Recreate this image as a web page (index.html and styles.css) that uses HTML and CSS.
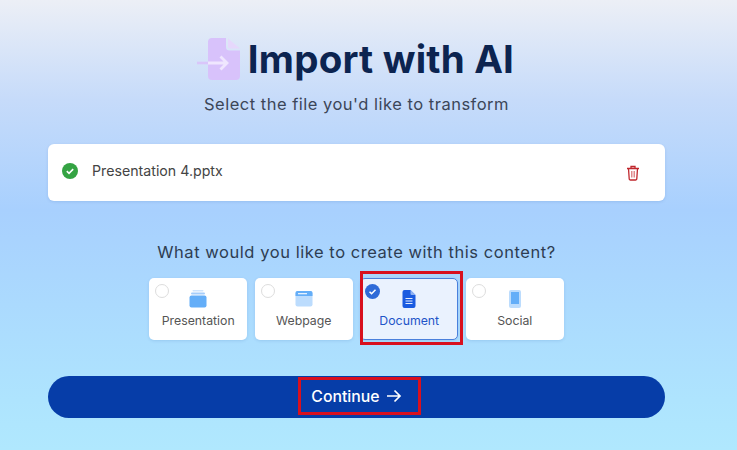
FILE: index.html
```html
<!DOCTYPE html>
<html>

<head>
    <meta charset="UTF-8" />
    <meta name="viewport" content="width=device-width, initial-scale=1.0" />
    <title>Import with AI</title>
    <link rel="stylesheet" href="styles.css">
</head>

<body>
    <div class="container">
        <div class="heading">
            <svg class="heading-icon" width="44" height="42" viewBox="0 0 44 42">
                <path d="M11 4a4 4 0 0 1 4-4h14v9a3.500 3.500 0 0 0 3.500 3.500H43V38a4 4 0 0 1-4 4H15a4 4 0 0 1-4-4z" fill="#d8c2fb" />
                <path d="M31 0.500L43 10.500H33a2 2 0 0 1-2-2z" fill="#e6d8fc" />
                <path d="M0 25h11" stroke="#d9c6fa" stroke-width="2.600" fill="none" />
                <path d="M11 25h19M23.500 18.500l6.500 6.500-6.500 6.500" stroke="#efe6fe" stroke-width="2.800" fill="none" />
            </svg>
            <h1>Import with AI</h1>
        </div>
        <p class="subtitle">Select the file you'd like to transform</p>

        <div class="file-card">
            <svg class="file-check" width="16" height="16" viewBox="0 0 16 16">
                <circle cx="8" cy="8" r="8" fill="#34a343" />
                <path d="M4.800 8.200l2.200 2.100 4.200-4.200" stroke="#fff" stroke-width="1.600" fill="none" />
            </svg>
            <span class="file-name">Presentation 4.pptx</span>
            <svg class="file-delete" width="14" height="16" viewBox="0 0 14 16">
                <path d="M1 3.500h12M5 3.500V1.500h4v2M2.500 3.500l.7 10.300a1.200 1.200 0 0 0 1.200 1.200h5.200a1.200 1.200 0 0 0 1.200-1.200l.7-10.300" stroke="#c0272d" stroke-width="1.300" fill="none" />
                <path d="M5.500 6v6.500M7 6v6.500M8.500 6v6.500" stroke="#e08a8d" stroke-width="1" fill="none" />
            </svg>
        </div>

        <h2>What would you like to create with this content?</h2>

        <div class="options">
            <div class="option">
                <span class="radio"></span>
                <svg class="option-icon" width="18" height="18" viewBox="0 0 18 18">
                    <rect x="3.500" y="0" width="11" height="1.500" rx=".7" fill="#cfe4fd" />
                    <rect x="2" y="2.500" width="14" height="2" rx="1" fill="#a5cdfb" />
                    <rect x="0.500" y="5.500" width="17" height="12" rx="2" fill="#64aef8" />
                </svg>
                <span class="option-label">Presentation</span>
            </div>
            <div class="option">
                <span class="radio"></span>
                <svg class="option-icon" width="18" height="16" viewBox="0 0 18 16">
                    <rect x="0.500" y="0" width="17" height="15.500" rx="2" fill="#bcdcfd" />
                    <path d="M0.500 2a2 2 0 0 1 2-2h13a2 2 0 0 1 2 2v3h-17z" fill="#64aef8" />
                    <rect x="3" y="2" width="9" height="1.300" fill="#e6f2fe" />
                </svg>
                <span class="option-label">Webpage</span>
            </div>
            <div class="option option-selected">
                <span class="radio radio-checked">
                    <svg width="16" height="16" viewBox="0 0 16 16">
                        <path d="M4.800 8.200l2.200 2.100 4.200-4.200" stroke="#fff" stroke-width="1.600" fill="none" />
                    </svg>
                </span>
                <svg class="option-icon" width="14" height="18" viewBox="0 0 14 18">
                    <path d="M0.500 2a2 2 0 0 1 2-2h6l5 5v11a2 2 0 0 1-2 2h-9a2 2 0 0 1-2-2z" fill="#1a5be0" />
                    <path d="M8.500 0l5 5h-4a1 1 0 0 1-1-1z" fill="#8fb2f2" />
                    <path d="M3.500 8.500h7M3.500 11h7M3.500 13.500h7" stroke="#e3ecfd" stroke-width="1.100" fill="none" />
                </svg>
                <span class="option-label">Document</span>
                <span class="highlight highlight-option"></span>
            </div>
            <div class="option">
                <span class="radio"></span>
                <svg class="option-icon" width="12" height="18" viewBox="0 0 12 18">
                    <rect x="0" y="0" width="12" height="18" rx="2" fill="#bcdcfd" />
                    <rect x="2" y="2" width="8" height="12" fill="#64aef8" />
                </svg>
                <span class="option-label">Social</span>
            </div>
        </div>

        <button type="button" class="continue">
            Continue
            <svg width="16" height="14" viewBox="0 0 16 14">
                <path d="M1 7h13M8.500 1.500L14 7l-5.500 5.500" stroke="#fff" stroke-width="1.700" fill="none" />
            </svg>
            <span class="highlight highlight-button"></span>
        </button>
    </div>
</body>

</html>
```
FILE: styles.css
```css
* {
    box-sizing: border-box;
    margin: 0;
    padding: 0;
}

html,
body {
    height: 450px;
    overflow: hidden;
}

body {
    background: linear-gradient(to bottom, #eceff6 0, #c6dbfa 100px, #a8d0fe 210px, #aee4fe 400px, #b0e8fe 450px);
    font-family: "Inter", "Liberation Sans", sans-serif;
    color: #333;
}

.container {
    display: flex;
    flex-direction: column;
    align-items: center;
    width: 617px;
    margin-left: 48px;
    padding-top: 36px;
}

.heading {
    display: flex;
    align-items: center;
    gap: 7px;
    height: 46px;
    margin-left: -2px;
}

h1 {
    font-size: 38.500px;
    font-weight: 700;
    color: #0c2450;
    letter-spacing: 0.2px;
}

.subtitle {
    margin-top: 11px;
    font-size: 16.500px;
    line-height: 22px;
    color: #3c4658;
    letter-spacing: 0.5px;
}

.file-card {
    display: flex;
    align-items: center;
    width: 100%;
    height: 57px;
    margin-top: 29px;
    padding: 0 25px 4px 14px;
    background-color: #FFFFFF;
    border-radius: 6px;
    box-shadow: 0 1px 3px rgba(40, 90, 160, 0.15);
}

.file-name {
    flex: 1;
    margin-left: 14px;
    font-size: 14.200px;
    color: #444;
}

.file-delete {
    margin-top: 4px;
}

h2 {
    margin-top: 40px;
    font-size: 16.500px;
    line-height: 22px;
    font-weight: 400;
    color: #2e3d52;
    letter-spacing: 0.55px;
}

.options {
    display: flex;
    gap: 7.500px;
    margin-top: 15px;
}

.option {
    position: relative;
    display: flex;
    flex-direction: column;
    align-items: center;
    width: 98px;
    height: 62px;
    padding-top: 12px;
    background-color: #FFFFFF;
    border-radius: 5px;
    box-shadow: 0 1px 3px rgba(40, 90, 160, 0.15);
}

.option-selected {
    background-color: #eaf2fe;
    border: 1px solid #4a80dc;
    padding-top: 11px;
}

.option-icon {
    height: 18px;
}

.option-label {
    margin-top: 5px;
    font-size: 12.300px;
    line-height: 16px;
    color: #555;
}

.option-selected .option-label {
    color: #1f55c8;
}

.radio {
    position: absolute;
    top: 6px;
    left: 6px;
    width: 14px;
    height: 14px;
    border: 1px solid #ddd;
    border-radius: 50%;
    background-color: #fff;
}

.radio-checked {
    top: 5px;
    left: 4px;
    width: 15px;
    height: 15px;
    border: none;
    background-color: #2f6bd8;
}

.radio-checked svg {
    display: block;
    width: 15px;
    height: 15px;
}

.continue {
    position: relative;
    display: flex;
    align-items: center;
    justify-content: center;
    gap: 6px;
    width: 100%;
    height: 42px;
    margin-top: 36px;
    padding-bottom: 2px;
    border: none;
    border-radius: 21px;
    background-color: #063da8;
    color: #FFFFFF;
    font-family: inherit;
    font-size: 15.800px;
    font-weight: 500;
}

.highlight {
    position: absolute;
    border: 3px solid #d8101e;
    pointer-events: none;
}

.highlight-option {
    top: -8px;
    left: -1px;
    width: 103px;
    height: 74px;
}

.highlight-button {
    top: 1px;
    left: 250px;
    width: 123px;
    height: 38px;
}
```
